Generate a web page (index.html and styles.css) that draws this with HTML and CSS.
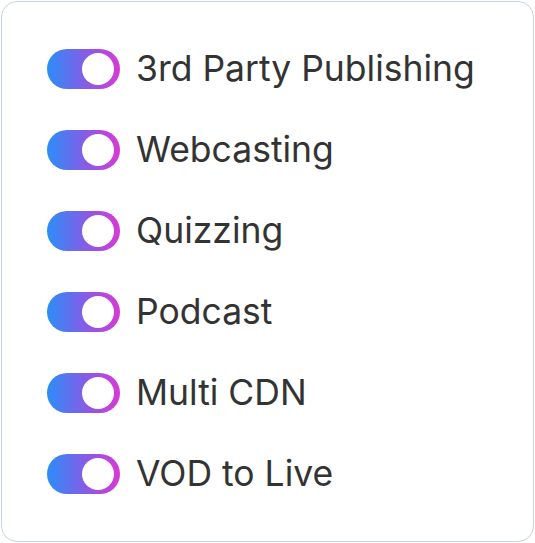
FILE: index.html
```html
<!DOCTYPE html>
<html lang="en">
<head>
    <meta charset="UTF-8">
    <meta name="viewport" content="width=device-width, initial-scale=1.0">
    <title>Features</title>
    <link rel="stylesheet" href="styles.css">
</head>
<body>
    <div class="card">
        <label class="feature">
            <span class="toggle on"><span class="knob"></span></span>
            <span class="feature-name">3rd Party Publishing</span>
        </label>
        <label class="feature">
            <span class="toggle on"><span class="knob"></span></span>
            <span class="feature-name">Webcasting</span>
        </label>
        <label class="feature">
            <span class="toggle on"><span class="knob"></span></span>
            <span class="feature-name">Quizzing</span>
        </label>
        <label class="feature">
            <span class="toggle on"><span class="knob"></span></span>
            <span class="feature-name">Podcast</span>
        </label>
        <label class="feature">
            <span class="toggle on"><span class="knob"></span></span>
            <span class="feature-name">Multi CDN</span>
        </label>
        <label class="feature">
            <span class="toggle on"><span class="knob"></span></span>
            <span class="feature-name">VOD to Live</span>
        </label>
    </div>
</body>
</html>
```

FILE: styles.css
```css
body {
    margin: 0;
    padding: 1px;
    background-color: #ffffff;
    font-family: Inter, "Noto Sans", sans-serif;
}

.card {
    box-sizing: border-box;
    width: 533px;
    height: 541px;
    padding: 47px 44px 47px 45px;
    border: 1.5px solid #c8d3df;
    border-radius: 16px;
    display: flex;
    flex-direction: column;
    gap: 41px;
}

.feature {
    display: flex;
    align-items: center;
    gap: 16px;
    cursor: pointer;
}

.toggle {
    box-sizing: border-box;
    width: 73px;
    height: 40px;
    padding: 4px 6px;
    border-radius: 20px;
    background: linear-gradient(90deg, #2b8ef8 0%, #8a5ae6 55%, #d83ad4 100%);
    display: flex;
    align-items: center;
    justify-content: flex-end;
    flex-shrink: 0;
}

.knob {
    width: 32px;
    height: 32px;
    border-radius: 50%;
    background-color: #ffffff;
}

.feature-name {
    font-size: 35.5px;
    color: #333333;
    line-height: 40px;
}
```
